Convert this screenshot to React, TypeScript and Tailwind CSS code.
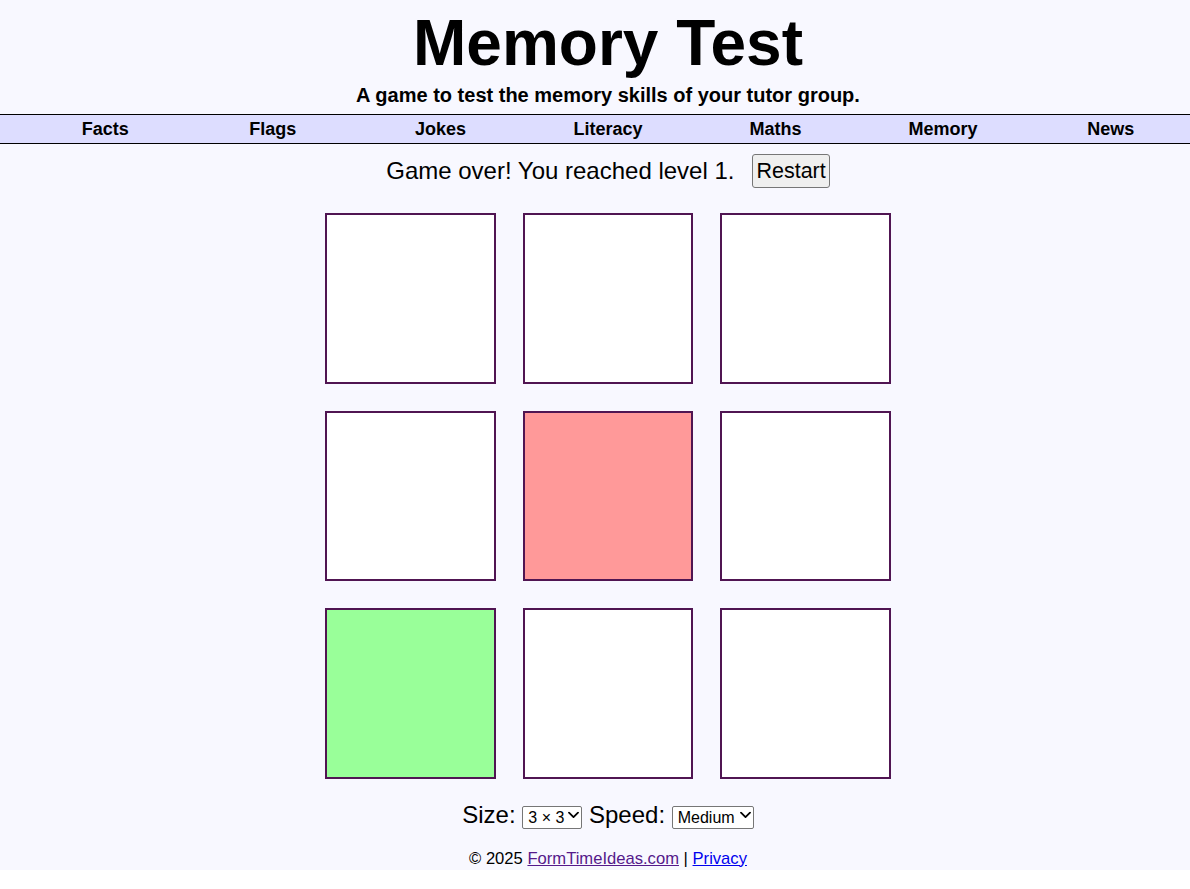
import { useState } from "react";

const links = ["Facts", "Flags", "Jokes", "Literacy", "Maths", "Memory", "News"];

// tile colours after the game ended: one wrong pick (red), one correct (green)
const tiles = ["white", "white", "white", "white", "wrong", "white", "right", "white", "white"] as const;

function Chevron() {
  return (
    <svg
      className="pointer-events-none absolute right-[3px] top-1/2 -translate-y-1/2"
      width="11"
      height="7"
      viewBox="0 0 11 7"
      fill="none"
    >
      <path d="M1 1.2 L5.5 5.6 L10 1.2" stroke="#000" strokeWidth="1.8" strokeLinecap="round" strokeLinejoin="round" />
    </svg>
  );
}

function Select({ width, options, value, onChange }: { width: string; options: string[]; value: string; onChange: (v: string) => void }) {
  return (
    <span className="relative inline-block align-baseline">
      <select
        value={value}
        onChange={(e) => onChange(e.target.value)}
        className={`${width} h-[23px] appearance-none rounded-[2px] border border-[#767676] bg-white pl-[5px] text-[16px] leading-[19px] text-black align-baseline`}
      >
        {options.map((o) => (
          <option key={o}>{o}</option>
        ))}
      </select>
      <Chevron />
    </span>
  );
}

export default function App() {
  const [size, setSize] = useState("3 × 3");
  const [speed, setSpeed] = useState("Medium");

  return (
    <div className="w-full overflow-hidden">
      <div className="w-[1216px] bg-[#f8f8ff] pb-[1px] text-center text-black font-['Liberation_Sans',Arial,sans-serif]">
        <h1 className="pt-[11px] text-[64px] font-bold leading-none">Memory Test</h1>
        <p className="mt-[9px] text-[20px] font-bold leading-[23px]">A game to test the memory skills of your tutor group.</p>

        <nav className="mt-[7px] h-[30px] border-y border-black bg-[#ddddff]">
          <ul className="grid h-full grid-cols-7 px-[21.5px]">
            {links.map((l) => (
              <li key={l} className="text-[18px] font-bold leading-[28px]">
                {l}
              </li>
            ))}
          </ul>
        </nav>

        <div className="mt-[10px] flex items-center justify-center gap-[18px]">
          <span className="text-[24px] leading-[28px]">Game over! You reached level 1.</span>
          <button className="h-[34px] rounded-[3px] border border-[#767676] bg-[#efefef] px-[3px] text-[21.5px] leading-[24px]">
            Restart
          </button>
        </div>

        <div className="mx-auto mt-[25px] grid w-[566px] grid-cols-3 gap-[27px]">
          {tiles.map((t, i) => (
            <div
              key={i}
              className={`h-[170.5px] border-2 border-[#501552] ${
                t === "wrong" ? "bg-[#ff9999]" : t === "right" ? "bg-[#99ff99]" : "bg-white"
              }`}
            />
          ))}
        </div>

        <div className="mt-[22.5px] text-[24px] leading-[28px]">
          Size: <Select width="w-[60px]" options={["3 × 3", "4 × 4", "5 × 5"]} value={size} onChange={setSize} /> Speed:{" "}
          <Select width="w-[82px]" options={["Slow", "Medium", "Fast"]} value={speed} onChange={setSpeed} />
        </div>

        <footer className="mt-[19.5px] text-[16.6px] leading-[20px]">
          © 2025{" "}
          <a href="#" className="text-[#551a8b] underline">
            FormTimeIdeas.com
          </a>{" "}
          |{" "}
          <a href="#" className="text-[#0000ee] underline">
            Privacy
          </a>
        </footer>
      </div>
    </div>
  );
}
